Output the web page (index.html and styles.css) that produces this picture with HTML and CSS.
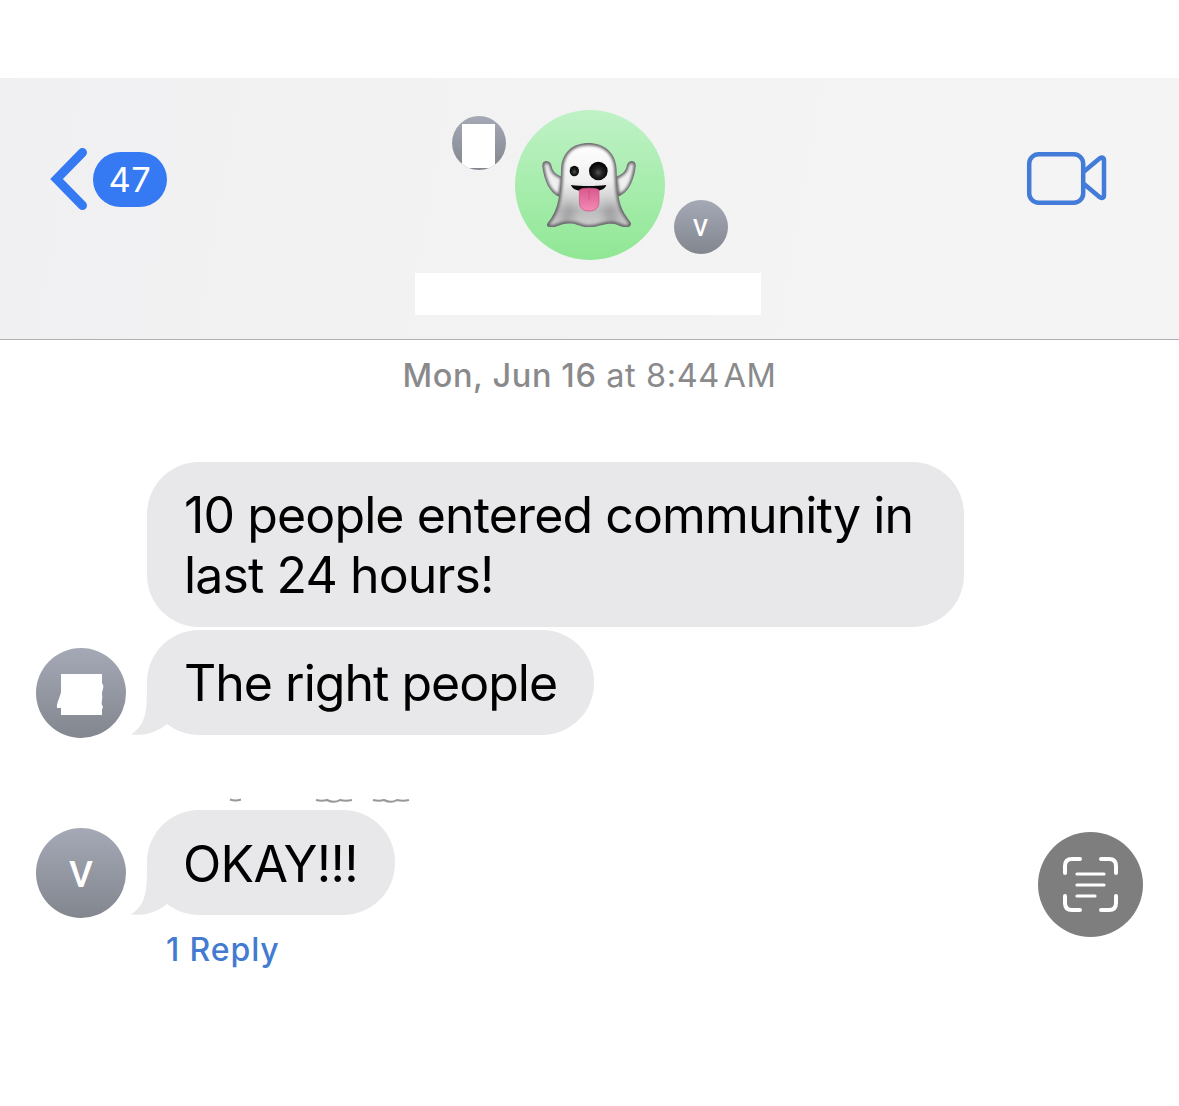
FILE: index.html
```html
<!DOCTYPE html>
<html lang="en">
<head>
    <meta charset="UTF-8">
    <meta name="viewport" content="width=device-width, initial-scale=1.0">
    <title>Messages</title>
    <link rel="stylesheet" href="styles.css">
</head>
<body>
    <!-- Header -->
    <header class="header">
        <div class="back">
            <svg class="back-arrow" width="38" height="64" viewBox="0 0 38 64">
                <path d="M33.500 5.500 L7.500 32 L33.500 58.500"/>
            </svg>
            <span class="unread">47</span>
        </div>

        <div class="group">
            <div class="group-avatars">
                <div class="avatar small first"><span class="blank"></span></div>
                <div class="avatar large">
                    <svg width="110" height="110" viewBox="0 0 330 330">
                        <defs>
                            <linearGradient id="body-fill" x1="0" y1="0" x2="0" y2="1">
                                <stop offset="0" stop-color="#fff"/>
                                <stop offset="0.45" stop-color="#f0f0f1"/>
                                <stop offset="0.8" stop-color="#bcbcbd"/>
                                <stop offset="1" stop-color="#cfcfd0"/>
                            </linearGradient>
                            <radialGradient id="eye-fill" cx="0.5" cy="0.58" r="0.5">
                                <stop offset="0" stop-color="#555"/>
                                <stop offset="0.45" stop-color="#222"/>
                                <stop offset="1" stop-color="#050505"/>
                            </radialGradient>
                            <linearGradient id="tongue-fill" x1="0" y1="0" x2="0" y2="1">
                                <stop offset="0" stop-color="#d9588c"/>
                                <stop offset="1" stop-color="#f48bb5"/>
                            </linearGradient>
                            <filter id="soft" x="-30%" y="-30%" width="160%" height="160%">
                                <feGaussianBlur stdDeviation="4"/>
                            </filter>
                            <filter id="softer" x="-100%" y="-60%" width="300%" height="220%">
                                <feGaussianBlur stdDeviation="12"/>
                            </filter>
                            <path id="body-shape" d="M78 118 C80 66 114 39 160 39 C208 39 243 68 245 118 C247 170 248 199 259 231 C267 252 279 265 288 279 C289 287 284 292 275 292 C255 292 247 281 232 281 C215 281 208 283 198 286 C186 290 176 292 161 292 C145 292 137 287 125 284 C113 280 108 280 92 281 C77 282 66 292 47 292 C37 292 33 286 38 279 C50 264 59 249 66 226 C76 190 77 155 78 118 Z"/>
                            <path id="arm-shape" d="M22 111 C18 87 47 88 50 108 C53 124 61 132 84 142 L76 202 C42 190 27 149 22 111 Z M302 111 C306 87 278 88 275 108 C272 124 263 132 240 142 L248 200 C282 190 297 149 302 111 Z"/>
                            <clipPath id="body-clip"><use href="#body-shape"/></clipPath>
                            <clipPath id="arm-clip"><use href="#arm-shape"/></clipPath>
                        </defs>
                        <g clip-path="url(#arm-clip)">
                            <use href="#arm-shape" fill="#f0f0f1"/>
                            <use class="shade" href="#arm-shape" filter="url(#soft)"/>
                        </g>
                        <g clip-path="url(#body-clip)">
                            <use href="#body-shape" fill="url(#body-fill)"/>
                            <path fill="#77777a" opacity="0.45" filter="url(#softer)" d="M95 215 L120 235 L105 290 H75 Z M205 235 L232 215 L252 290 H215 Z"/>
                            <use class="shade" href="#body-shape" filter="url(#soft)"/>
                        </g>
                        <ellipse cx="118" cy="123" rx="14" ry="15.5" fill="url(#eye-fill)"/>
                        <circle cx="190" cy="123" r="28" fill="url(#eye-fill)"/>
                        <path fill="#080808" d="M108 165 C140 169 180 169 214 165 C210 178 197 184 161 184 C126 184 112 178 108 165 Z"/>
                        <path fill="url(#tongue-fill)" stroke="#c44f7e" stroke-width="2" d="M133 180 C143 173 153 176 162 174 C170 176 182 173 192 180 V215 C192 233 181 243 162 243 C144 243 133 233 133 215 Z"/>
                        <path fill="none" stroke="#c94f84" stroke-width="2" d="M162 176 V210"/>
                    </svg>
                </div>
                <div class="avatar small last">V</div>
            </div>
            <div class="group-name"></div>
        </div>

        <svg class="video" width="82" height="56" viewBox="0 0 82 56">
            <rect x="4.200" y="4.200" width="54" height="48.600" rx="9.500"/>
            <path d="M59 21.500 L74.500 8.500 Q79 6 79 10.500 V45 Q79 49.500 74.500 47 L59 34"/>
        </svg>
    </header>

    <!-- Conversation -->
    <main class="chat">
        <p class="date"><strong>Mon, Jun 16</strong> at 8:44&#8202;AM</p>

        <div class="row first-row">
            <div class="bubble">10 people entered community in<br>last 24 hours!</div>
        </div>

        <div class="row second-row">
            <div class="avatar">
                <svg width="90" height="90" viewBox="0 0 90 90">
                    <path fill="#fff" d="M25 26 H66 V35 C69 39 66 42 66 46 C67 51 65 54 66 57 C68 60 66 61 66 61 V67 H25 V60 H21 C20 55 25 48 25 43 Z"/>
                </svg>
            </div>
            <div class="bubble">
                The right people
                <svg class="tail" width="40" height="48" viewBox="0 0 40 48">
                    <path d="M16 0 C16 27 14 38 0 47.500 C12 49 25 46 36 37 L40 0 Z"/>
                </svg>
            </div>
        </div>

        <!-- Bottom edge of the hidden sender line -->
        <svg class="cut-line" width="190" height="5" viewBox="0 0 190 5">
            <path d="M10 1.500 Q15.500 3.500 21 1.500"/>
            <path d="M96 2 Q102 3.500 107 2 Q114 5.500 120 2 Q126 3.500 132 2 M153 2 Q159 3.500 164 2 Q171 5.500 177 2 Q183 3.500 189 2"/>
        </svg>

        <div class="row third-row">
            <div class="avatar">V</div>
            <div class="bubble">
                OKAY!!!
                <svg class="tail" width="40" height="48" viewBox="0 0 40 48">
                    <path d="M16 0 C16 27 14 38 0 47.500 C12 49 25 46 36 37 L40 0 Z"/>
                </svg>
            </div>
        </div>
        <a class="reply">1 Reply</a>

        <!-- Floating scan text button -->
        <div class="scan">
            <svg width="105" height="105" viewBox="0 0 105 105">
                <path class="corner" d="M27 41 V34 Q27 27 34 27 H42 M63 27 H71 Q78 27 78 34 V41 M78 64 V71 Q78 78 71 78 H63 M42 78 H34 Q27 78 27 71 V64"/>
                <path class="lines" d="M39 42 H66 M39 53 H66 M39 64 H57"/>
            </svg>
        </div>
    </main>
</body>
</html>
```
FILE: styles.css
```css
body {
    margin: 0;
    padding-top: 78px;
    background-color: #fff;
    color: #000;
    font-family: Inter, Roboto, sans-serif;
}
svg {
    display: block;
}
.header {
    display: grid;
    grid-template-columns: 1fr auto 1fr;
    align-items: start;
    box-sizing: border-box;
    height: 262px;
    padding: 32px 72px 0 49px;
    background: linear-gradient(100deg, #f0f0f2, #f2f2f3 30%, #f4f4f4);
    border-bottom: 1px solid #b0b0b2;
}
.back {
    display: flex;
    align-items: center;
    gap: 6px;
    margin-top: 37px;
}
.back-arrow path {
    fill: none;
    stroke: #367af3;
    stroke-width: 9;
    stroke-linecap: round;
    stroke-linejoin: miter;
}
.unread {
    box-sizing: border-box;
    width: 74px;
    height: 55px;
    border-radius: 27.5px;
    background-color: #367af3;
    color: #fff;
    font-size: 34.5px;
    line-height: 55px;
    letter-spacing: 0.6px;
    text-align: center;
}
.group {
    display: flex;
    flex-direction: column;
    align-items: center;
    margin-left: 23px;
}
.group-avatars {
    display: flex;
    gap: 9px;
    height: 150px;
}
.avatar {
    display: flex;
    align-items: center;
    justify-content: center;
    box-sizing: border-box;
    flex: none;
    width: 90px;
    height: 90px;
    padding-top: 2px;
    border-radius: 50%;
    background: linear-gradient(#a5a9b6, #82868e);
    color: #fff;
    font-family: Roboto, sans-serif;
    font-size: 37px;
    font-weight: 500;
}
.avatar.small {
    width: 54px;
    height: 54px;
    font-size: 23px;
}
.avatar.first {
    margin-top: 6px;
    overflow: hidden;
}
.avatar.last {
    margin-bottom: 6px;
    align-self: flex-end;
}
.avatar.large {
    width: 150px;
    height: 150px;
    padding-top: 0;
    background: linear-gradient(#bff2c6, #90e795);
}
.second-row .avatar {
    padding-top: 0;
}
.shade {
    fill: none;
    stroke: #606063;
    stroke-width: 13;
}
.blank {
    width: 33px;
    height: 44px;
    margin-top: 3px;
    background-color: #fff;
}
.group-name {
    width: 346px;
    height: 42px;
    margin-top: 13px;
    margin-right: 3px;
    background-color: #fff;
}
.video {
    justify-self: end;
    margin-top: 40px;
    fill: none;
    stroke: #427bd8;
    stroke-width: 4.5;
    stroke-linejoin: round;
}
.chat {
    position: relative;
}
.date {
    margin: 0;
    padding-top: 16px;
    color: #8a8a8c;
    font-size: 32.5px;
    line-height: 40px;
    letter-spacing: 0.6px;
    text-align: center;
}
.date strong {
    font-weight: 550;
}
.row {
    display: flex;
    align-items: flex-start;
    height: 105px;
    padding-left: 36px;
    gap: 21px;
}
.first-row {
    height: 165px;
    margin-top: 66px;
    padding-left: 147px;
}
.second-row {
    margin-top: 3px;
}
.row .avatar {
    margin-top: 18px;
}
.bubble {
    position: relative;
    box-sizing: border-box;
    padding: 23px 36px 22px 37px;
    border-radius: 52px;
    background-color: #e8e8ea;
    font-size: 50px;
    line-height: 60px;
    letter-spacing: -0.88px;
    white-space: nowrap;
}
.first-row .bubble {
    width: 817px;
}
.second-row .bubble {
    width: 447px;
    letter-spacing: -1px;
}
.third-row .bubble {
    width: 248px;
    padding-top: 24px;
    padding-bottom: 21px;
    padding-left: 36px;
    letter-spacing: -0.7px;
}
.tail {
    position: absolute;
    left: -16px;
    bottom: 0;
    fill: #e8e8ea;
}
.cut-line {
    margin: 63px 0 0 220px;
    fill: none;
    stroke: #98989a;
    stroke-width: 2;
}
.third-row {
    margin-top: 7px;
}
.reply {
    display: block;
    margin: 15px 0 0 166px;
    color: #427bd0;
    font-size: 32px;
    font-weight: 500;
    line-height: 40px;
    letter-spacing: 0.9px;
}
.scan {
    position: absolute;
    top: 491.5px;
    right: 36px;
    border-radius: 50%;
    background-color: #7e7e7e;
}
.scan path {
    fill: none;
    stroke: #fff;
    stroke-linecap: round;
}
.scan .corner {
    stroke-width: 4;
}
.scan .lines {
    stroke-width: 3.2;
}
```
